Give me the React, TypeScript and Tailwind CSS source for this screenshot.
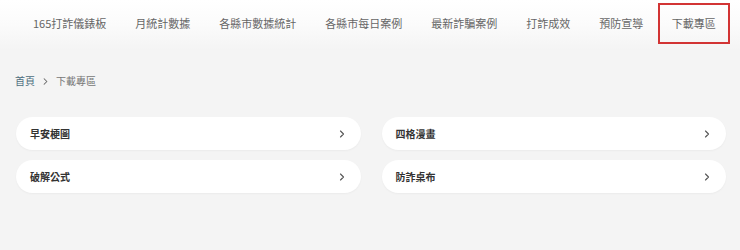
import { ChevronRight } from 'lucide-react'

const navItems = [
	'165打詐儀錶板',
	'月統計數據',
	'各縣市數據統計',
	'各縣市每日案例',
	'最新詐騙案例',
	'打詐成效',
	'預防宣導',
	'下載專區',
]

const downloads = ['早安梗圖', '四格漫畫', '破解公式', '防詐桌布']

export default function App() {
	return (
		<div
			className="h-[250px] w-[740px] overflow-hidden bg-[#f4f4f4]"
			style={{ fontFamily: '"Noto Sans CJK TC", "Noto Sans", sans-serif' }}
		>
			{/* Top nav */}
			<nav className="flex h-[50px] items-start bg-gradient-to-b from-white via-[#fbfbfb] to-[#f4f4f4] pl-[18.5px] pt-[3px]">
				{navItems.map((item) => {
					const active = item === '下載專區'
					return (
						<div
							key={item}
							className={
								active
									? 'flex h-[41px] w-[72px] shrink-0 items-center justify-center whitespace-nowrap border-2 border-[#d23434] text-[11px] text-[#666]'
									: 'flex h-[41px] shrink-0 items-center whitespace-nowrap border-2 border-transparent px-[12.5px] text-[11px] text-[#666]'
							}
						>
							{item}
						</div>
					)
				})}
			</nav>

			{/* Breadcrumb */}
			<div className="mt-[25px] flex h-[12px] items-center pl-[15px] text-[10px] leading-none">
				<span className="text-[#4d6d7d]">首頁</span>
				<ChevronRight className="mx-[5px] size-[11px] text-[#666]" strokeWidth={2.2} />
				<span className="text-[#777]">下載專區</span>
			</div>

			{/* Cards */}
			<div className="mt-[30px] grid grid-cols-2 gap-x-[21px] gap-y-[10px] pl-[16px] pr-[14px]">
				{downloads.map((d) => (
					<div
						key={d}
						className="flex h-[33px] items-center justify-between rounded-full bg-white pl-[14px] pr-[13px] shadow-[0_1px_2px_rgba(0,0,0,0.04)]"
					>
						<span className="text-[10px] font-bold text-[#333]">{d}</span>
						<ChevronRight className="size-[12px] text-[#555]" strokeWidth={2.2} />
					</div>
				))}
			</div>
		</div>
	)
}
